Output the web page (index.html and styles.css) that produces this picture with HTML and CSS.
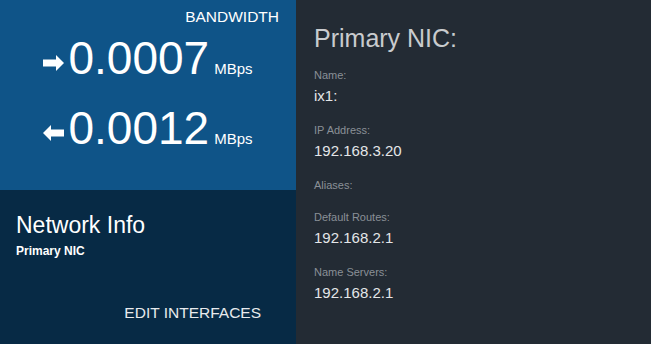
FILE: index.html
```html
<!DOCTYPE html>
<html lang="en">
<head>
    <meta charset="UTF-8">
    <meta name="viewport" content="width=device-width, initial-scale=1.0">
    <title>Network Info</title>
    <link rel="stylesheet" href="styles.css">
</head>
<body>
    <div class="sidebar">
        <!-- Bandwidth card -->
        <div class="bandwidth">
            <div class="bw-title">BANDWIDTH</div>
            <div class="rate"><svg class="arrow" viewBox="0 0 21 16" width="21" height="16"><path d="M0 4.5H13V0L21 8L13 16V11.5H0Z" fill="#fff"/></svg><span class="rate-value">0.0007</span><span class="rate-unit">MBps</span></div>
            <div class="rate rate-in"><svg class="arrow" viewBox="0 0 21 16" width="21" height="16"><path d="M21 4.5H8V0L0 8L8 16V11.5H21Z" fill="#fff"/></svg><span class="rate-value">0.0012</span><span class="rate-unit">MBps</span></div>
        </div>

        <!-- Network info card -->
        <div class="netinfo">
            <h2 class="netinfo-title">Network Info</h2>
            <div class="netinfo-sub">Primary NIC</div>
            <div class="netinfo-actions">
                <button class="edit-btn">EDIT INTERFACES</button>
            </div>
        </div>
    </div>

    <div class="details">
        <h1 class="details-title">Primary NIC:</h1>
        <div class="field">
            <div class="field-label">Name:</div>
            <div class="field-value">ix1:</div>
        </div>
        <div class="field">
            <div class="field-label">IP Address:</div>
            <div class="field-value">192.168.3.20</div>
        </div>
        <div class="field">
            <div class="field-label">Aliases:</div>
        </div>
        <div class="field">
            <div class="field-label">Default Routes:</div>
            <div class="field-value">192.168.2.1</div>
        </div>
        <div class="field">
            <div class="field-label">Name Servers:</div>
            <div class="field-value">192.168.2.1</div>
        </div>
    </div>
</body>
</html>
```

FILE: styles.css
```css
:root {
    --bandwidth-bg: #0f5488;
    --netinfo-bg: #072a45;
    --details-bg: #232b34;
    --title-color: #c9cbce;
    --label-color: #8a9097;
    --value-color: #e4e6e8;
}

* {
    box-sizing: border-box;
    margin: 0;
    padding: 0;
}

body {
    font-family: 'Liberation Sans', Arial, sans-serif;
    display: flex;
    height: 100vh;
    background-color: var(--details-bg);
    color: #fff;
}

.sidebar {
    width: 296px;
    display: flex;
    flex-direction: column;
}

.bandwidth {
    height: 190px;
    background-color: var(--bandwidth-bg);
    padding: 8px 17px 0;
    text-align: center;
}

.bw-title {
    text-align: right;
    font-size: 15.5px;
    line-height: 18px;
    margin-bottom: 9px;
}

.rate {
    font-size: 46px;
    line-height: 1;
    white-space: nowrap;
}

.rate-in {
    margin-top: 24px;
}

.arrow {
    vertical-align: 3px;
    margin-right: 4px;
}

.rate-unit {
    font-size: 15px;
    margin-left: 5px;
}

.netinfo {
    flex: 1;
    background-color: var(--netinfo-bg);
    padding: 21px 19px 13px 16px;
    display: flex;
    flex-direction: column;
}

.netinfo-title {
    font-size: 23px;
    line-height: 28px;
    font-weight: 400;
}

.netinfo-sub {
    font-size: 12px;
    line-height: 16px;
    font-weight: 700;
    margin-top: 4px;
}

.netinfo-actions {
    margin-top: auto;
    display: flex;
    justify-content: flex-end;
}

.edit-btn {
    font-family: inherit;
    font-size: 15.5px;
    line-height: 20px;
    padding: 8px 16px;
    background: none;
    border: none;
    color: #e8eaed;
    cursor: pointer;
}

.details {
    flex: 1;
    padding: 23px 18px;
}

.details-title {
    font-size: 25px;
    line-height: 30px;
    font-weight: 400;
    color: var(--title-color);
    margin-bottom: 15px;
}

.field {
    margin-bottom: 18px;
}

.field-label {
    font-size: 11px;
    line-height: 14px;
    color: var(--label-color);
}

.field-value {
    font-size: 15px;
    line-height: 18px;
    margin-top: 5px;
    color: var(--value-color);
}
```
